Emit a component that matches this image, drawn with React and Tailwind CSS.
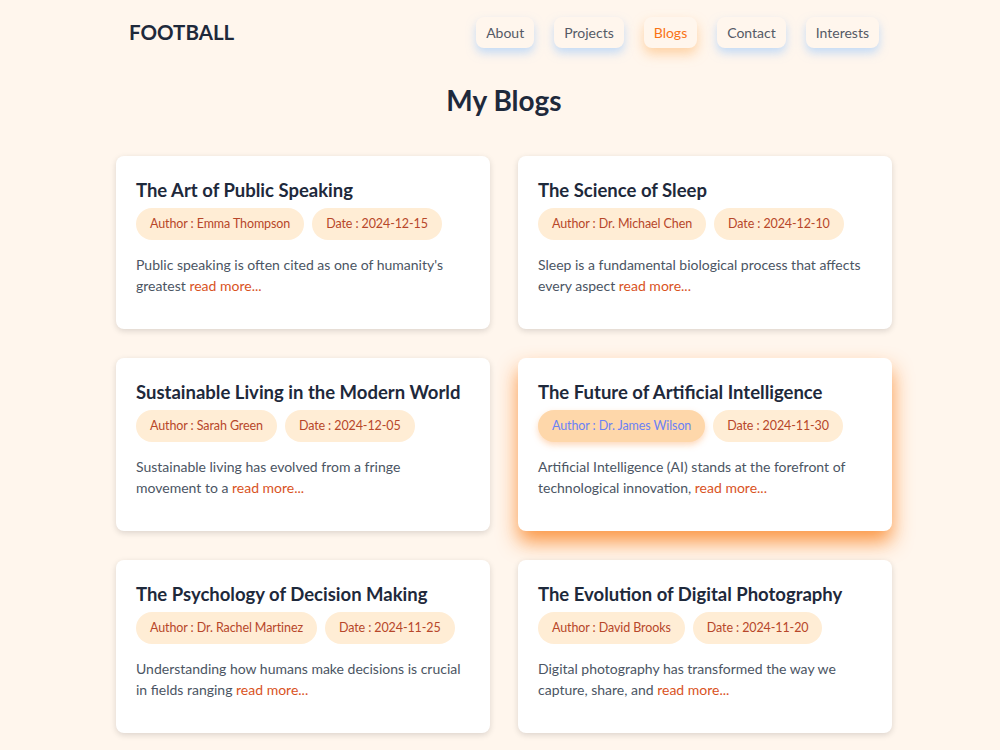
import React from 'react';

const navItems = ['About', 'Projects', 'Blogs', 'Contact', 'Interests'];

const blogs = [
  {
    title: 'The Art of Public Speaking',
    author: 'Emma Thompson',
    date: '2024-12-15',
    excerpt: "Public speaking is often cited as one of humanity's greatest",
  },
  {
    title: 'The Science of Sleep',
    author: 'Dr. Michael Chen',
    date: '2024-12-10',
    excerpt: 'Sleep is a fundamental biological process that affects every aspect',
  },
  {
    title: 'Sustainable Living in the Modern World',
    author: 'Sarah Green',
    date: '2024-12-05',
    excerpt: 'Sustainable living has evolved from a fringe movement to a',
  },
  {
    title: 'The Future of Artificial Intelligence',
    author: 'Dr. James Wilson',
    date: '2024-11-30',
    excerpt: 'Artificial Intelligence (AI) stands at the forefront of technological innovation,',
    active: true,
  },
  {
    title: 'The Psychology of Decision Making',
    author: 'Dr. Rachel Martinez',
    date: '2024-11-25',
    excerpt: 'Understanding how humans make decisions is crucial in fields ranging',
  },
  {
    title: 'The Evolution of Digital Photography',
    author: 'David Brooks',
    date: '2024-11-20',
    excerpt: 'Digital photography has transformed the way we capture, share, and',
  },
];

function BlogCard({ blog }) {
  return (
    <div
      className={
        blog.active
          ? 'bg-white rounded-lg px-5 pt-5 pb-8 h-[173px] shadow-[0_11px_20px_rgba(251,140,50,0.9)]'
          : 'bg-white rounded-lg px-5 pt-5 pb-8 h-[173px] shadow-[0_2px_6px_rgba(0,0,0,0.14)]'
      }
    >
      <h3 className="text-[18.5px] leading-7 font-bold text-[#1e293b] whitespace-nowrap">{blog.title}</h3>
      <div className="flex gap-2 mt-1">
        <span
          className={
            blog.active
              ? 'rounded-full px-3.5 h-8 flex items-center whitespace-nowrap text-[12.5px] tracking-[-0.1px] bg-[#fed7aa] text-[#6b82f5] shadow-[0_3px_6px_rgba(251,146,60,0.35)]'
              : 'rounded-full px-3.5 h-8 flex items-center whitespace-nowrap text-[12.5px] tracking-[-0.1px] bg-[#ffedd5] text-[#b7472a]'
          }
        >
          Author : {blog.author}
        </span>
        <span className="rounded-full px-3.5 h-8 flex items-center whitespace-nowrap text-[12.5px] tracking-[-0.1px] bg-[#ffedd5] text-[#b7472a]">
          Date : {blog.date}
        </span>
      </div>
      <p className="mt-[14px] pr-[7px] text-[14px] leading-[21px] text-[#4b5563]">
        {blog.excerpt} <a href="#" className="text-[#d9531e]">read more...</a>
      </p>
    </div>
  );
}

export default function App() {
  return (
    <div className="min-h-screen bg-[#fff6ed] font-['Lato',sans-serif] pl-2">
      <div className="max-w-[778px] mx-auto">
        <header className="flex items-center justify-between px-[14px] pt-[17px]">
          <h1 className="text-[20.5px] font-bold text-[#1e293b]">FOOTBALL</h1>
          <nav className="flex gap-5">
            {navItems.map((item) => (
              <a
                key={item}
                href="#"
                className={
                  item === 'Blogs'
                    ? 'h-[31px] px-2.5 flex items-center rounded-lg bg-[#fff6ed] text-[14px] text-[#f97316] shadow-[0_6px_12px_rgba(253,186,116,0.6)]'
                    : 'h-[31px] px-2.5 flex items-center rounded-lg bg-[#fff6ed] text-[14px] text-[#555a66] shadow-[0_5px_10px_rgba(147,197,253,0.55)]'
                }
              >
                {item}
              </a>
            ))}
          </nav>
        </header>

        <h2 className="text-center text-[28px] font-bold text-[#1e293b] mt-[31px]">My Blogs</h2>

        <div className="grid grid-cols-2 gap-x-7 gap-y-[29px] mt-[35px] px-px">
          {blogs.map((blog) => (
            <BlogCard key={blog.title} blog={blog} />
          ))}
        </div>
      </div>
    </div>
  );
}
